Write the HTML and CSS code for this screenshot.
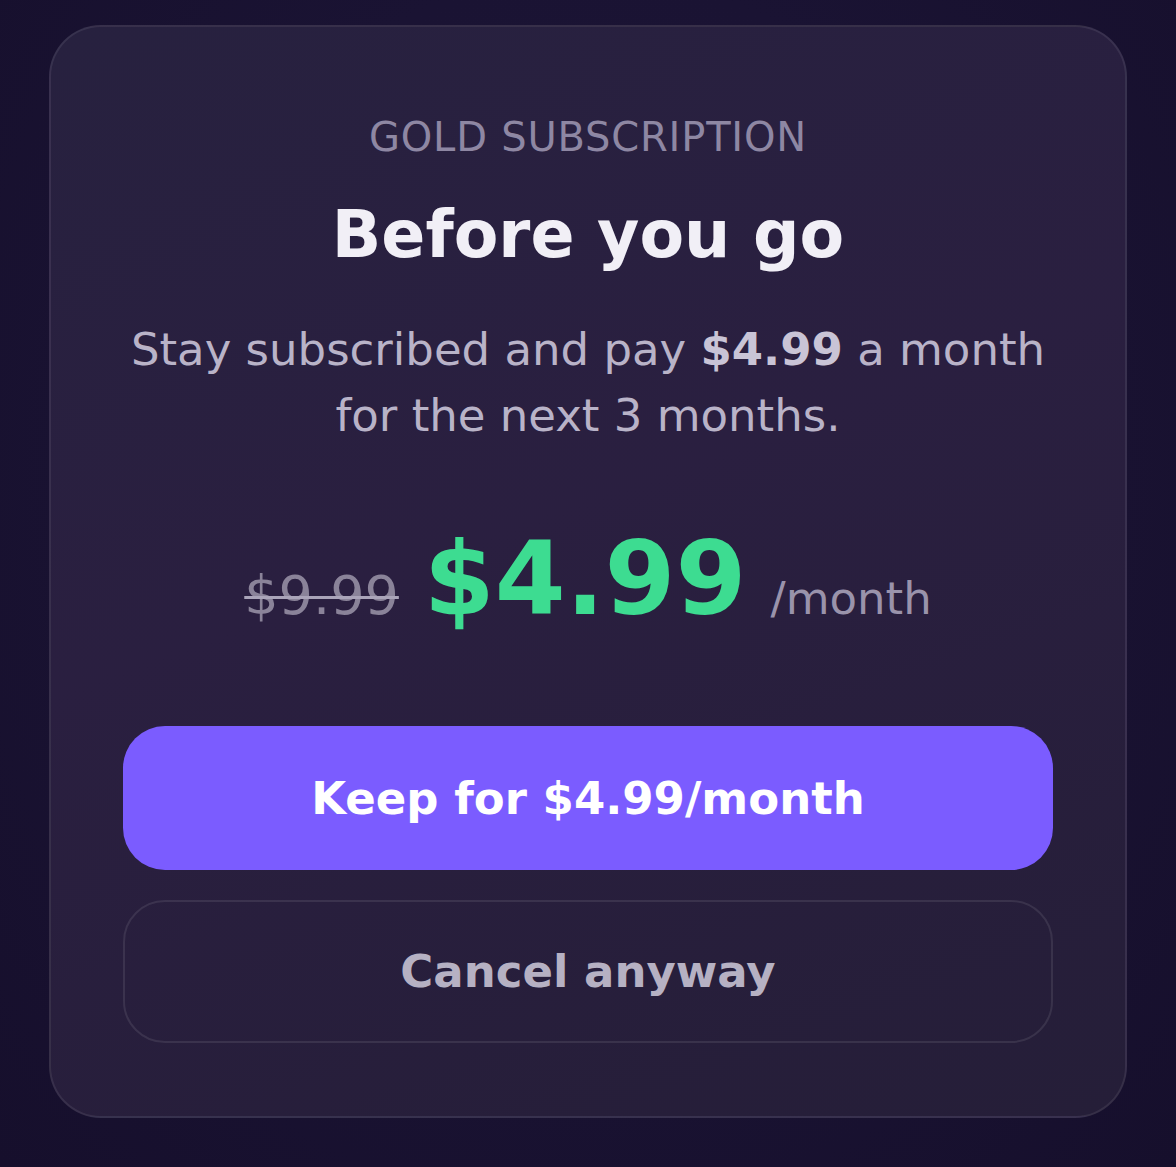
FILE: index.html
```html
<!DOCTYPE html>
<html lang="en">
<head>
<meta charset="utf-8">
<title>Before you go</title>
<link rel="stylesheet" href="styles.css">
</head>
<body>
<main class="page">
  <section class="card">
    <p class="eyebrow">GOLD SUBSCRIPTION</p>
    <h1 class="title">Before you go</h1>
    <p class="lead">Stay subscribed and pay <strong>$4.99</strong> a month for the next 3 months.</p>
    <div class="price">
      <span class="old">$9.99</span>
      <span class="new">$4.99</span>
      <span class="per">/month</span>
    </div>
    <button class="btn btn-primary" type="button">Keep for $4.99/month</button>
    <button class="btn btn-ghost" type="button">Cancel anyway</button>
  </section>
</main>
</body>
</html>
```
FILE: styles.css
```css
html, body {
  margin: 0;
  padding: 0;
}
body {
  background: radial-gradient(ellipse at 50% 40%, #1c1537 0%, #1a1333 50%, #160f2c 100%);
  min-height: 1167px;
  font-family: "DejaVu Sans", Verdana, sans-serif;
}
.page {
  padding: 25px 49px;
}
.card {
  box-sizing: border-box;
  border: 2px solid rgba(255, 255, 255, 0.08);
  border-radius: 52px;
  background: linear-gradient(160deg, #27213f 0%, #2a1f40 45%, #251e38 100%);
  padding: 86px 72px 73px;
  text-align: center;
  display: flex;
  flex-direction: column;
}
.eyebrow {
  margin: 0;
  font-size: 40px;
  line-height: 48px;
  letter-spacing: 0.8px;
  color: #8e87a3;
}
.title {
  margin: 35px 0 0;
  font-size: 65px;
  line-height: 78px;
  font-weight: bold;
  color: #f1eff6;
}
.lead {
  margin: 43px 0 0;
  font-size: 45px;
  line-height: 66px;
  color: #b9b3c8;
}
.lead strong {
  font-weight: bold;
  color: #c9c4d6;
}
.price {
  margin-top: 79px;
  display: flex;
  justify-content: center;
  align-items: baseline;
  gap: 24px;
  line-height: 1;
}
.old {
  font-size: 54px;
  color: #8a8399;
  text-decoration: line-through;
  text-decoration-color: #aaa4b9;
  text-decoration-thickness: 3px;
}
.new {
  margin-left: 1px;
  font-size: 102px;
  font-weight: bold;
  color: #3ddc91;
}
.per {
  margin-left: 0;
  font-size: 45px;
  color: #9a93ab;
}
.btn {
  box-sizing: border-box;
  width: 100%;
  font-family: "DejaVu Sans", Verdana, sans-serif;
  font-size: 45px;
  font-weight: bold;
  border-radius: 42px;
  cursor: pointer;
  padding: 0;
}
.btn-primary {
  margin-top: 96px;
  height: 144px;
  border: none;
  background: #7b5cff;
  color: #ffffff;
}
.btn-ghost {
  margin-top: 30px;
  height: 143px;
  border: 2px solid rgba(255, 255, 255, 0.09);
  background: transparent;
  color: #b6b1c3;
}
```
